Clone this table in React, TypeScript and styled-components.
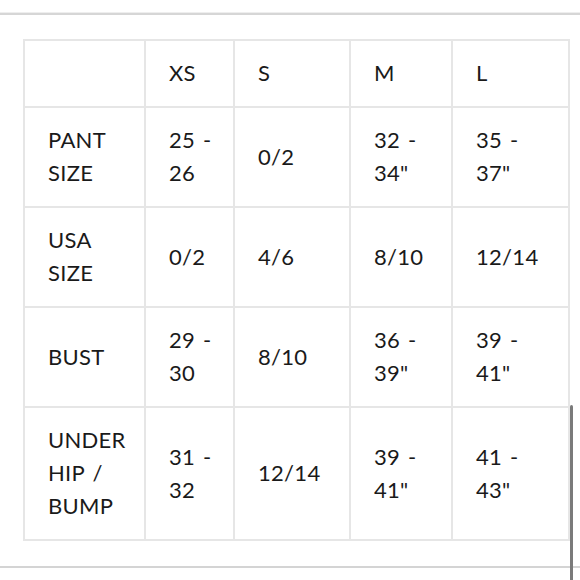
import React from 'react';
import styled, { createGlobalStyle } from 'styled-components';

const GlobalStyle = createGlobalStyle`
  html, body {
    margin: 0;
    padding: 0;
    background: #ffffff;
  }
  body {
    font-family: 'Lato', 'Liberation Sans', sans-serif;
    color: #1d1d1d;
  }
`;

const Page = styled.div`
  position: relative;
  width: 580px;
  height: 580px;
  overflow: hidden;
  background: #fff;
`;

const TopBar = styled.div`
  height: 13px;
  border-bottom: 2px solid #d6d6d6;
  box-shadow: 0 -4px 0 -3px #eeeeee inset;
`;

const Content = styled.div`
  padding: 24px 11px 25px 23px;
  border-bottom: 2px solid #d4d4d4;
`;

const SizeTable = styled.table`
  width: 100%;
  border-collapse: collapse;
  border: 2px solid #e6e6e6;
  table-layout: fixed;
`;

const Cell = styled.td`
  border: 2px solid #e6e6e6;
  padding: 15px 12px 17px 23px;
  font-size: 22px;
  font-weight: 400;
  line-height: 33px;
  vertical-align: middle;
  text-align: left;
  color: #1a1a1a;
  letter-spacing: 0.3px;
  word-spacing: 2px;
`;

const ScrollThumb = styled.div`
  position: absolute;
  right: 7px;
  top: 405px;
  width: 3px;
  height: 200px;
  border-radius: 2px;
  background: #7a7a7a;
`;

const widths = [121, 89, 116, 102, 117];

const header = ['', 'XS', 'S', 'M', 'L'];

const rows: string[][] = [
  ['PANT SIZE', '25 - 26', '0/2', '32 - 34"', '35 - 37"'],
  ['USA SIZE', '0/2', '4/6', '8/10', '12/14'],
  ['BUST', '29 - 30', '8/10', '36 - 39"', '39 - 41"'],
  ['UNDER HIP / BUMP', '31 - 32', '12/14', '39 - 41"', '41 - 43"'],
];

const App: React.FC = () => {
  return (
    <Page>
      <GlobalStyle />
      <TopBar />
      <Content>
        <SizeTable>
          <colgroup>
            {widths.map((w, i) => (
              <col key={i} style={{ width: w }} />
            ))}
          </colgroup>
          <tbody>
            <tr>
              {header.map((h, i) => (
                <Cell key={i}>{h}</Cell>
              ))}
            </tr>
            {rows.map((r, i) => (
              <tr key={i}>
                {r.map((c, j) => (
                  <Cell key={j}>{c}</Cell>
                ))}
              </tr>
            ))}
          </tbody>
        </SizeTable>
      </Content>
      <ScrollThumb />
    </Page>
  );
};

export default App;
